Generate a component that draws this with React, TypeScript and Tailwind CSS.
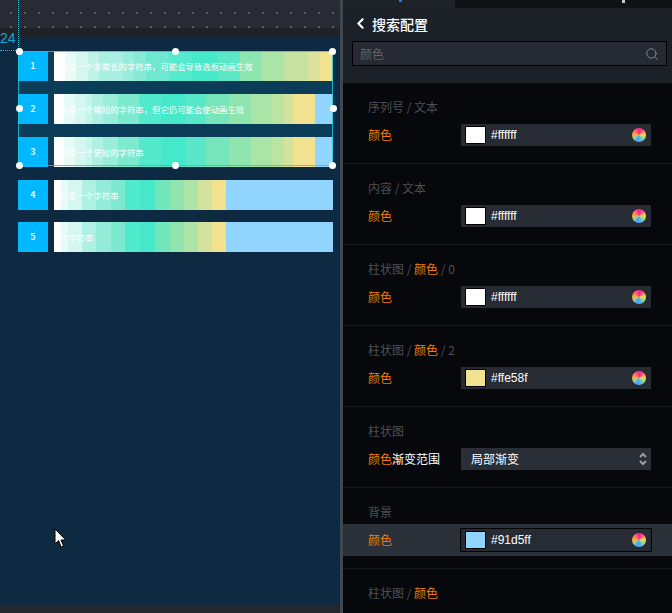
import React from "react";
import { ChevronLeft, Search } from "lucide-react";

const seg1: [number, string][] = [
  [11, "#ffffff"], [11, "#e6faf6"], [12, "#d5f7ef"], [11, "#bff3e8"], [24, "#aaf0e2"], [11, "#97eddb"], [12, "#88ead6"], [23, "#6ee8d0"],
  [23, "#55e9cd"], [25, "#45e8c9"], [23, "#5ce8c6"], [22, "#8de5b0"], [22, "#aae4a6"], [24, "#c5e2a0"], [12, "#dbe29a"], [13, "#f2e290"],
];
const seg2: [number, string][] = [
  [10, "#ffffff"], [11, "#e6faf6"], [11, "#d5f7ef"], [6, "#c4f4ea"], [11, "#b0f0e3"], [15, "#98eddb"], [21, "#7deace"], [22, "#52e9cc"],
  [25, "#45e8c9"], [20, "#58e8c9"], [23, "#76e6ba"], [22, "#90e5ae"], [21, "#aae4a6"], [12, "#bde3a2"], [9, "#d5e29c"], [22, "#f2e28f"], [18, "#91d5ff"],
];
const seg3: [number, string][] = [
  [7, "#ffffff"], [7, "#e6faf6"], [14, "#d5f7ef"], [14, "#aef0e3"], [15, "#92ecd8"], [14, "#7deace"], [15, "#4fe9cc"], [15, "#46e8c9"],
  [15, "#72e6bb"], [14, "#90e5ae"], [14, "#aee4a6"], [14, "#d5e29c"], [14, "#f2e28f"], [107, "#91d5ff"],
];

const rows = [
  { n: 1, text: "这是一个非常长的字符串，可能会导致选框动画生效", seg: seg1, mt: "mt-0" },
  { n: 2, text: "这是一个略短的字符串，但它仍可能会使动画生效", seg: seg2, mt: "mt-[13px]" },
  { n: 3, text: "这是一个更短的字符串", seg: seg2, mt: "mt-[13px]" },
  { n: 4, text: "这是一个字符串", seg: seg3, mt: "mt-[13px]" },
  { n: 5, text: "个字符串", seg: seg3, mt: "mt-3" },
];

const handles = [
  "left-[16px] top-[48px]", "left-[172px] top-[48px]", "left-[329px] top-[48px]",
  "left-[16px] top-[105px]", "left-[330px] top-[105px]",
  "left-[16px] top-[162px]", "left-[172px] top-[162px]", "left-[329px] top-[162px]",
];

function Wheel() {
  return <span className="ml-auto mr-[5px] h-[14px] w-[14px] rounded-full bg-[conic-gradient(#ff1f9e_0deg,#ff4f86_40deg,#ffd84d_80deg,#a8dc80_120deg,#58b8e8_160deg,#4a9cff_200deg,#8fd0a0_235deg,#f7b23b_270deg,#ff7a4a_310deg,#ff1f9e_360deg)]" />;
}

function ColorField({ color, swatch, active }: { color: string; swatch?: string; active?: boolean }) {
  return (
    <div className={`flex h-[22px] w-[190px] items-center bg-[#272b33] pl-1 ${active ? "outline outline-1 outline-black" : ""}`}>
      <span className="h-[18px] w-[21px] border border-black" style={{ background: swatch ?? color }} />
      <span className="ml-[5px] font-['Liberation_Sans',sans-serif] text-[12px] leading-none text-white">{color}</span>
      <Wheel />
    </div>
  );
}

function Section({ label, color, swatch, active }: { label: React.ReactNode; color: string; swatch?: string; active?: boolean }) {
  return (
    <div className="h-[81px] border-b border-[#15191e] pt-[16px]">
      <div className="h-[16px] pl-[25px] text-[12px] leading-[16px] text-[#4c4f54]">{label}</div>
      <div className={`mt-[9px] flex items-center pl-[25px] pr-5 text-[12px] ${active ? "h-[32px] -translate-y-[5px] bg-[#2a3139]" : "h-[22px]"}`}>
        <span className="w-[93px] text-[#f57a00]">颜色</span>
        <ColorField color={color} swatch={swatch} active={active} />
      </div>
    </div>
  );
}

const O = ({ children }: { children: React.ReactNode }) => <span className="text-[#f57a00]">{children}</span>;

export default function App() {
  return (
    <div className="flex h-[613px] w-[672px] overflow-hidden bg-black font-['Noto_Sans_CJK_SC','Noto_Sans',sans-serif]">
      <div className="relative flex h-full w-[340px] flex-col bg-[#0e2a42]">
        <div className="h-[28px] bg-[#282b33] bg-[radial-gradient(circle,#5a5e66_1px,transparent_1.2px)] bg-[length:14px_14px] bg-[position:4px_6px]" />
        <div className="h-[9px] bg-[#1f2227]" />
        <div className="relative flex-1 pl-[18px] pt-[14px]">
          <div className="absolute left-[18px] top-[14px] h-[114px] w-[315px] bg-[#0b3c58]" />
          {rows.map((r) => (
            <div key={r.n} className={`relative flex h-[30px] ${r.mt}`}>
              <div className="flex h-[30px] w-[30px] items-center justify-center bg-[#00b8ff] text-[9px] font-bold text-[#d9f4ff]">{r.n}</div>
              <div className="relative ml-[6px] flex h-[30px] w-[279px]">
                {r.seg.map(([w, c], i) => (
                  <div key={i} className="h-full" style={{ width: w, background: c }} />
                ))}
                <span className="absolute left-[6px] top-0 whitespace-nowrap text-[8.4px] leading-[30px] text-white">{r.text}</span>
              </div>
            </div>
          ))}
        </div>
        <div className="h-[8px] bg-[#24272b]" />

        <div className="absolute left-0 top-[31px] font-['Liberation_Sans',sans-serif] text-[14px] leading-[14px] text-[#1aa8c8]">24</div>
        <div className="absolute left-[18px] top-0 h-[51px] border-l border-dotted border-[#1fb6d0]" />
        <div className="absolute left-0 top-[50px] w-[18px] border-t border-dotted border-[#1fb6d0]" />
        <div className="absolute left-[18px] top-[51px] h-[115px] w-[315px] border border-[#1fc8dc]/80" />
        {handles.map((h) => (
          <span key={h} className={`absolute h-[7px] w-[7px] rounded-full bg-white ${h}`} />
        ))}
        <svg className="absolute left-[54px] top-[528px]" width="13" height="21" viewBox="0 0 13 21">
          <path d="M1 1v15l3.5-3.4L7.2 19l2.4-1-2.6-6h4.8z" fill="#fff" stroke="#000" strokeWidth="1" />
        </svg>
      </div>
      <div className="w-[3px] bg-[#41474f]" />
      <div className="flex h-full w-[329px] flex-col bg-[#07080b]">
        <div className="h-[83px] bg-[#1c2127]">
          <div className="flex h-[8px]">
            <div className="relative w-[112px] bg-[#1d2329]">
              <span className="absolute left-[56px] top-0 h-[2px] w-[3px] bg-[#1b7fe0]" />
            </div>
            <div className="relative flex-1 bg-[#101216]">
              <span className="absolute left-[167px] top-0 h-[3px] w-[3px] bg-[#c8c8c8]" />
            </div>
          </div>
          <div className="flex h-[33px] items-center pb-[2px] pl-[9px]">
            <ChevronLeft size={17} strokeWidth={3} className="text-white" />
            <span className="ml-[3px] text-[14px] font-medium leading-none text-white">搜索配置</span>
          </div>
          <div className="ml-[9px] flex h-[25px] w-[315px] items-center justify-between border border-black bg-[#262a33] px-[7px]">
            <span className="text-[12px] text-[#5f6368]">颜色</span>
            <Search size={14} strokeWidth={1.6} className="text-[#8a8f96]" />
          </div>
        </div>
        <Section label="序列号 / 文本" color="#ffffff" />
        <Section label="内容 / 文本" color="#ffffff" />
        <Section label={<>柱状图 / <O>颜色</O> / 0</>} color="#ffffff" />
        <Section label={<>柱状图 / <O>颜色</O> / 2</>} color="#ffe58f" swatch="#f2e28f" />
        <div className="h-[81px] border-b border-[#15191e] pt-[16px]">
          <div className="h-[16px] pl-[25px] text-[12px] leading-[16px] text-[#4c4f54]">柱状图</div>
          <div className="mt-[9px] flex h-[22px] items-center pl-[25px] pr-5 text-[12px]">
            <span className="w-[93px] text-white"><O>颜色</O>渐变范围</span>
            <div className="flex h-[22px] w-[190px] items-center justify-between bg-[#2a2e36] pl-[10px] pr-[3px]">
              <span className="text-white">局部渐变</span>
              <svg width="10" height="14" viewBox="0 0 10 14" fill="none" stroke="#9a9ea4" strokeWidth="2">
                <path d="M2 5l3-3 3 3M2 9l3 3 3-3" />
              </svg>
            </div>
          </div>
        </div>
        <Section label="背景" color="#91d5ff" active />
        <div className="flex-1 pt-[16px] pl-[25px] text-[12px] leading-[16px] text-[#4c4f54]">柱状图 / <O>颜色</O></div>
      </div>
    </div>
  );
}
